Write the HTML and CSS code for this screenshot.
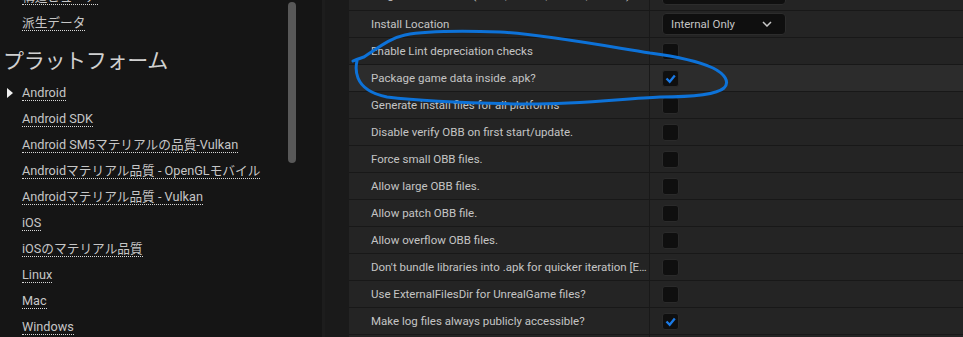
FILE: index.html
```html
<!DOCTYPE html>
<html lang="ja">
<head>
<meta charset="utf-8">
<link rel="stylesheet" href="styles.css">
</head>
<body>
<div class="app">
  <aside class="nav">
    <ul class="nav-list">
      <li class="nav-item"><span class="link">構造ビューア</span></li>
      <li class="nav-item"><span class="link">派生データ</span></li>
      <li class="nav-heading">プラットフォーム</li>
      <li class="nav-item active"><span class="arrow"></span><span class="link">Android</span></li>
      <li class="nav-item"><span class="link">Android SDK</span></li>
      <li class="nav-item"><span class="link">Android SM5マテリアルの品質-Vulkan</span></li>
      <li class="nav-item"><span class="link">Androidマテリアル品質 - OpenGLモバイル</span></li>
      <li class="nav-item"><span class="link">Androidマテリアル品質 - Vulkan</span></li>
      <li class="nav-item"><span class="link">iOS</span></li>
      <li class="nav-item"><span class="link">iOSのマテリアル品質</span></li>
      <li class="nav-item"><span class="link">Linux</span></li>
      <li class="nav-item"><span class="link">Mac</span></li>
      <li class="nav-item"><span class="link">Windows</span></li>
    </ul>
    <div class="scrollbar"></div>
  </aside>
  <div class="splitter"></div>
  <main class="details">
    <div class="rows">
      <div class="row first"><div class="name">Target SDK Version (9=2.3, 14=4.0, 21=5.0, 26=8.0)</div><div class="value"><div class="textbox"></div></div></div>
      <div class="row"><div class="name">Install Location</div><div class="value"><div class="combo"><span>Internal Only</span><svg class="chev" width="10" height="6" viewBox="0 0 10 6"><polyline points="1,1 5,5 9,1" fill="none" stroke="#c8c8c8" stroke-width="1.5"/></svg></div></div></div>
      <div class="row"><div class="name">Enable Lint depreciation checks</div><div class="value"><div class="check"></div></div></div>
      <div class="row hl"><div class="name">Package game data inside .apk?</div><div class="value"><div class="check"><svg width="17" height="17" viewBox="0 0 17 17"><polyline points="4.5,8.5 7.7,11.8 12.8,5.5" fill="none" stroke="#1a7ae6" stroke-width="2.3"/></svg></div></div></div>
      <div class="row"><div class="name">Generate install files for all platforms</div><div class="value"><div class="check"></div></div></div>
      <div class="row"><div class="name">Disable verify OBB on first start/update.</div><div class="value"><div class="check"></div></div></div>
      <div class="row"><div class="name">Force small OBB files.</div><div class="value"><div class="check"></div></div></div>
      <div class="row"><div class="name">Allow large OBB files.</div><div class="value"><div class="check"></div></div></div>
      <div class="row"><div class="name">Allow patch OBB file.</div><div class="value"><div class="check"></div></div></div>
      <div class="row"><div class="name">Allow overflow OBB files.</div><div class="value"><div class="check"></div></div></div>
      <div class="row"><div class="name">Don't bundle libraries into .apk for quicker iteration [E…</div><div class="value"><div class="check"></div></div></div>
      <div class="row"><div class="name">Use ExternalFilesDir for UnrealGame files?</div><div class="value"><div class="check"></div></div></div>
      <div class="row"><div class="name">Make log files always publicly accessible?</div><div class="value"><div class="check"><svg width="17" height="17" viewBox="0 0 17 17"><polyline points="4.5,8.5 7.7,11.8 12.8,5.5" fill="none" stroke="#1a7ae6" stroke-width="2.3"/></svg></div></div></div>
      <div class="row"><div class="name"></div><div class="value"></div></div>
    </div>
  </main>
</div>
<svg class="annotation" width="963" height="337" viewBox="0 0 963 337">
  <path d="M353,61 C357,59 361,58 364,57 C378,48 390,38 405,35 C425,31 470,31 500,32 C540,34 600,45 650,53 C680,57 700,62 713,68 C725,74 730,82 724,88 C716,95 690,97 660,97 C620,99 570,105 520,104 C470,103 420,101 387,97 C372,94 362,88 358,78 C355,70 356,65 357,61" fill="none" stroke="#0d72d8" stroke-width="3" stroke-linecap="round" stroke-linejoin="round"/>
</svg>
</body>
</html>
```
FILE: styles.css
```css
html, body {
  margin: 0;
  padding: 0;
  background: #151515;
  overflow: hidden;
}
body {
  width: 963px;
  height: 337px;
  position: relative;
  font-family: Roboto, "Noto Sans CJK JP", sans-serif;
  color: #c4c4c4;
}
.app {
  display: flex;
  height: 337px;
}
.nav {
  width: 322px;
  flex: none;
  background: #151515;
  position: relative;
  overflow: hidden;
}
.nav-list {
  list-style: none;
  margin: -16px 0 0 0;
  padding: 0;
}
.nav-item {
  height: 26px;
  display: flex;
  align-items: center;
  padding-left: 22px;
  padding-top: 1px;
  box-sizing: border-box;
  position: relative;
  font-size: 12.7px;
}
.link {
  display: inline-block;
  line-height: 14px;
  border-bottom: 1px dotted #d8d8d8;
  color: #c6c6c6;
  white-space: nowrap;
}
.arrow {
  position: absolute;
  left: 7px;
  top: 8px;
  width: 0;
  height: 0;
  border-top: 5px solid transparent;
  border-bottom: 5px solid transparent;
  border-left: 6px solid #f0f0f0;
}
.nav-heading {
  margin-top: 6px;
  height: 38px;
  line-height: 38px;
  font-size: 21px;
  padding-left: 3px;
  color: #d0d0d0;
  letter-spacing: -0.3px;
}
.scrollbar {
  position: absolute;
  left: 288px;
  top: 2px;
  width: 8px;
  height: 161px;
  border-radius: 4px;
  background: #585858;
}
.splitter {
  width: 3px;
  flex: none;
  background: #1d1d1d;
}
.details {
  flex: 1;
  background: #1a1a1a;
  padding-left: 24px;
  overflow: hidden;
}
.rows {
  margin-top: -16px;
  display: flex;
  flex-direction: column;
  gap: 1px;
  background: #181818;
}
.row {
  height: 26px;
  display: flex;
  background: #242424;
  font-size: 11.5px;
}
.row.hl {
  background: #2c2c2c;
}
.name {
  width: 278px;
  flex: none;
  padding-left: 22px;
  display: flex;
  align-items: center;
  white-space: nowrap;
  overflow: hidden;
  color: #c4c4c4;
  border-right: 1px solid #191919;
}
.row.first .name {
  padding-bottom: 5px;
}
.value {
  flex: 1;
  display: flex;
  align-items: center;
  padding-left: 12px;
}
.check {
  width: 15px;
  height: 15px;
  border: 1px solid #2a2a2a;
  border-radius: 3px;
  background: #0f0f0f;
  position: relative;
}
.check svg {
  position: absolute;
  left: -1px;
  top: -1px;
}
.combo, .textbox {
  width: 122px;
  height: 20px;
  border: 1px solid #2c2c2c;
  border-radius: 4px;
  background: #0f0f0f;
  display: flex;
  align-items: center;
  justify-content: space-between;
  box-sizing: content-box;
}
.textbox {
  align-self: flex-start;
  margin-top: -1px;
}
.combo span {
  padding-left: 8px;
  font-size: 11.5px;
  color: #c4c4c4;
}
.chev {
  margin-right: 13px;
}
.annotation {
  position: absolute;
  left: 0;
  top: 0;
  pointer-events: none;
}
```
